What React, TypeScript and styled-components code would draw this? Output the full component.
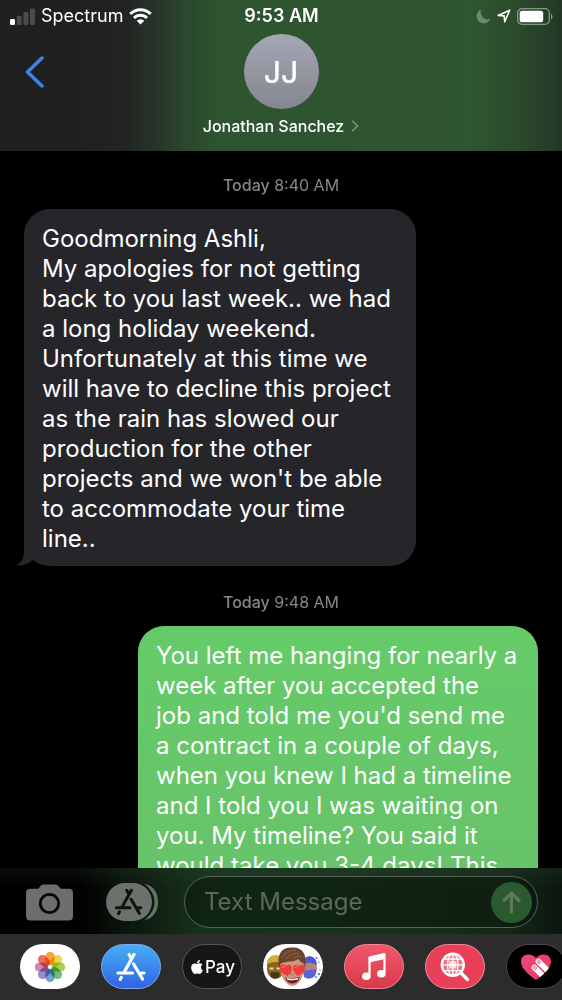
import React from "react";
import styled, { createGlobalStyle } from "styled-components";
import { FaApple } from "react-icons/fa";

const GlobalStyle = createGlobalStyle`
  *, *::before, *::after { box-sizing: border-box; }
  html, body { margin: 0; background: #000; }
  body, button, input { font-family: Inter, "Liberation Sans", sans-serif; }
  button { margin: 0; padding: 0; border: 0; background: none; color: inherit; cursor: pointer; }
  svg { display: block; flex: none; }
`;

const Screen = styled.div`
  display: flex;
  flex-direction: column;
  height: 100vh;
  overflow: hidden;
  background: #000;
  color: #fff;
`;

const Header = styled.header`
  flex: none;
  height: 151px;
  background: linear-gradient(
    90deg,
    #202020 0%,
    #202020 15%,
    #222422 22%,
    #26352a 28%,
    #2b482d 33%,
    #2e5430 39%,
    #2e5630 84%,
    #2a4a2c 92%,
    #263c28 98%,
    #243525 100%
  );
`;

const StatusBar = styled.div`
  display: grid;
  grid-template-columns: 1fr auto 1fr;
  align-items: center;
  height: 32px;
  padding: 0 9px 0 10px;
  font-size: 18px;
  line-height: 22px;
`;

const StatusGroup = styled.div<{ $end?: boolean }>`
  display: flex;
  align-items: center;
  justify-content: ${(p) => (p.$end ? "flex-end" : "flex-start")};
  gap: 6px;
`;

const Clock = styled.time`
  font-weight: 600;
`;

const ContactBar = styled.div`
  display: grid;
  grid-template-columns: 1fr auto 1fr;
  align-items: start;
  padding: 2px 24px 0;
`;

const BackButton = styled.button`
  justify-self: start;
  height: 75px;
`;

const Contact = styled.button`
  display: flex;
  flex-direction: column;
  align-items: center;
  gap: 7px;
`;

const Avatar = styled.span`
  display: flex;
  align-items: center;
  justify-content: center;
  width: 75px;
  height: 75px;
  border-radius: 50%;
  background: linear-gradient(#a4a7b5, #84868f);
  font-size: 30px;
  font-weight: 500;
`;

const ContactName = styled.span`
  display: flex;
  align-items: center;
  gap: 7px;
  font-size: 16px;
  font-weight: 500;
  line-height: 20px;
`;

const Conversation = styled.main`
  flex: 1;
  min-height: 0;
  display: flex;
  flex-direction: column;
  overflow-y: auto;
  scrollbar-width: none;
  padding: 24px 24px 0;
`;

const Stamp = styled.p`
  flex: none;
  margin: 0 0 14px;
  text-align: center;
  color: #87878b;
  font-size: 16px;
  line-height: 20px;

  b { font-weight: 500; }
`;

const Bubble = styled.div<{ $sent?: boolean }>`
  position: relative;
  flex: none;
  width: ${(p) => (p.$sent ? "400px" : "392px")};
  max-width: 80%;
  align-self: ${(p) => (p.$sent ? "flex-end" : "flex-start")};
  margin-bottom: ${(p) => (p.$sent ? "0" : "26px")};
  padding: 15px 18px 12px;
  border-radius: ${(p) => (p.$sent ? "26px 26px 0 0" : "26px")};
  background: ${(p) => (p.$sent ? "linear-gradient(#65cb68, #68c26a)" : "#26252a")};
  font-size: 24px;
  line-height: 30px;
  white-space: pre-line;
`;

const Tail = styled.svg`
  position: absolute;
  left: -8px;
  bottom: 0;
`;

const Composer = styled.form`
  flex: none;
  display: flex;
  align-items: center;
  height: 66px;
  padding: 2px 24px 0 26px;
  background:
    linear-gradient(rgba(60, 90, 60, 0.16), rgba(0, 0, 0, 0) 30%),
    linear-gradient(90deg, #000 0%, #000 14%, #0a150c 22%, #17321b 36%, #18321b 60%, #14291a 90%, #0b160d 100%);
`;

const CameraButton = styled.button`
  margin-right: 33px;
`;

const AppsButton = styled.button`
  margin-right: 26px;
`;

const Field = styled.div`
  flex: 1;
  min-width: 0;
  display: flex;
  align-items: center;
  height: 52px;
  padding: 0 5px 0 19px;
  border: 1px solid #566158;
  border-radius: 26px;
  background: rgba(6, 14, 7, 0.4);
`;

const MessageInput = styled.input`
  flex: 1;
  min-width: 0;
  padding: 0;
  border: 0;
  outline: 0;
  background: transparent;
  color: #fff;
  font-size: 24px;
  line-height: 30px;

  &::placeholder { color: #5b685d; opacity: 1; }
`;

const SendButton = styled.button`
  display: flex;
  align-items: center;
  justify-content: center;
  width: 41px;
  height: 41px;
  border-radius: 50%;
  background: #2a5a2e;
`;

const AppStrip = styled.nav`
  flex: none;
  display: flex;
  gap: 21px;
  height: 66px;
  padding: 10px 0 0 20px;
  overflow: hidden;
  background: #2c2c2d;
`;

const AppButton = styled.button<{ $bg: string; $ring?: string }>`
  flex: none;
  display: flex;
  align-items: center;
  justify-content: center;
  width: 60px;
  height: 45px;
  overflow: hidden;
  border: 1px solid ${(p) => p.$ring ?? "transparent"};
  border-radius: 23px;
  background: ${(p) => p.$bg} border-box;
  font-size: 17px;
  font-weight: 500;
`;

const SignalIcon = () => (
  <svg width="25" height="17" viewBox="0 0 25 17">
    <rect x="0" y="11" width="5" height="6" rx="1.2" fill="#fff" />
    <g fill="#4b4b4b">
      <rect x="6.7" y="8" width="5" height="9" rx="1.2" />
      <rect x="13.4" y="4" width="5" height="13" rx="1.2" />
      <rect x="20" y="0.5" width="5" height="16.5" rx="1.2" />
    </g>
  </svg>
);

const WifiIcon = () => (
  <svg width="23" height="17" viewBox="0 0 23 17">
    <g fill="none" stroke="#fff" strokeWidth="2.9">
      <path d="M1.2 6A14.6 14.6 0 0 1 21.8 6" />
      <path d="M5 10A9.2 9.2 0 0 1 18 10" />
    </g>
    <path d="M7.7 12.8A5.4 5.4 0 0 1 15.3 12.8L11.5 16.6Z" fill="#fff" />
  </svg>
);

const MoonIcon = () => (
  <svg width="15" height="15" viewBox="0 0 15 15">
    <path d="M5 .6A7.2 7.2 0 1 0 14.4 10.1C9 12 3.2 7 5 .6Z" fill="#6f8a70" />
  </svg>
);

const LocationIcon = () => (
  <svg width="14" height="14" viewBox="0 0 14 14">
    <path d="M1.2 6.4L12.7 1.2L7.7 12.7L7.2 6.9Z" fill="none" stroke="#fff" strokeWidth="1.6" strokeLinejoin="round" />
  </svg>
);

const BatteryIcon = () => (
  <svg width="36" height="17" viewBox="0 0 36 17">
    <rect x=".7" y=".7" width="31.6" height="15.6" rx="4.4" fill="none" stroke="#83997f" strokeWidth="1.3" />
    <rect x="2.7" y="2.7" width="23.5" height="11.6" rx="2.6" fill="#fff" />
    <path d="M34 5.7C36 6.6 36 10.4 34 11.3Z" fill="#83997f" />
  </svg>
);

const CameraIcon = () => (
  <svg width="47" height="37" viewBox="0 0 47 37">
    <path
      d="M4.5 4.8H11.5C13.5 4.8 14 1 17 .5H29.5C33 1 33.5 4.8 35.5 4.8H42.5Q47 4.8 47 9V32.3Q47 36.5 42.5 36.5H4.5Q0 36.5 0 32.3V9Q0 4.8 4.5 4.8Z"
      fill="#6e6e6e"
    />
    <circle cx="23.5" cy="19.5" r="9.2" fill="none" stroke="#050605" strokeWidth="2.8" />
  </svg>
);

const AppStoreMark = ({ color }: { color: string }) => (
  <g fill="none" stroke={color} strokeWidth="3.2" strokeLinecap="round">
    <path d="M18 2.5L8.5 19.5M13 2.5L15.5 6.6M17.6 12L26.5 27M2 21H16.5M24.8 21H28M5.3 25.4L4.2 27.4" />
  </g>
);

const AppsIcon = () => (
  <svg width="52" height="38" viewBox="0 0 52 38">
    <path d="M38 .8C48 2.5 52 10 52 19S48 35.5 38 37.2C50 30 50 8 38 .8Z" fill="#627264" />
    <rect x="0" y="0" width="48.5" height="38" rx="19" fill="#0b160d" />
    <rect x="0" y="0" width="46" height="38" rx="19" fill="#6c716d" />
    <g transform="translate(8.5 5) scale(.94)">
      <AppStoreMark color="#0b150d" />
    </g>
  </svg>
);

const petals = ["#f79a26", "#e8d532", "#9ccb3c", "#54b26c", "#5a95cf", "#8d7cc0", "#c378a8", "#f0584a"];

const PhotosIcon = () => (
  <svg width="32" height="32" viewBox="-16 -16 32 32">
    {petals.map((color, i) => (
      <rect
        key={color}
        x="-4.6"
        y="-15.2"
        width="9.2"
        height="13.4"
        rx="4.6"
        fill={color}
        fillOpacity=".88"
        transform={`rotate(${i * 45})`}
        style={{ mixBlendMode: "multiply" }}
      />
    ))}
  </svg>
);

const MemojiIcon = () => (
  <svg width="60" height="45" viewBox="0 0 60 45">
    <g>
      <ellipse cx="12.5" cy="24.5" rx="8.6" ry="10.5" fill="#8a6526" />
      <path d="M4 21C3 8 21 8 21 20Q12 16 4 21Z" fill="#d3ac35" />
      <path d="M4 20.5Q12 16 20 20V22.500Q12 19 4 23Z" fill="#8b6516" />
      <path d="M6.500 24.500H10.500M13.500 24.500H17.500" stroke="#e9d9a8" strokeWidth="1.800" />
      <path d="M7 29Q12 27 17 29L16 33Q12 36 8 33Z" fill="#4a3418" />
    </g>
    <g>
      <ellipse cx="46.500" cy="24.500" rx="7.500" ry="9.500" fill="#b08478" />
      <path d="M40 20C40 9 54 10 54 21Q47 17 40 20Z" fill="#4f57cf" />
      <path d="M40 27Q48 25 53.500 26L52 32Q46 37 41 33Z" fill="#5b66d4" />
      <g fill="#7577ee">
        <circle cx="53.5" cy="14" r="1.1" />
        <circle cx="56" cy="18.500" r=".8" />
        <circle cx="56" cy="30" r="1.3" />
        <circle cx="53" cy="33" r="1" />
        <circle cx="57" cy="26" r=".8" />
      </g>
    </g>
    <g transform="translate(-1 0)">
      <path d="M18 22C18 10 22 6 30 6S43 10 42 22C42 32 37 42 30.500 42S18 32 18 22Z" fill="#d1937a" />
      <path d="M17.200 24C14.500 9 20 3.500 30 3.500S45.500 9 43 24L41.500 19.500L39 18L36 15Q32 18 27 17.500L20 19L18.500 20Z" fill="#6b432c" />
      <path d="M20 14Q25 6 34 6.500M24 15Q29 9 37 9.500M31 14Q36 11 39.500 13" fill="none" stroke="#8a5a3c" strokeWidth="1.200" />
      <path d="M23 33.500Q31 35 38 33Q36 39.500 30.500 39.500T23 33.500Z" fill="#672321" />
      <path d="M24.500 34Q31 35.500 36.500 33.700L36 35.500Q30 37 25.300 35.700Z" fill="#fff" />
      <path d="M29.500 26L28 30Q30 31.500 32 30" fill="none" stroke="#b8745a" strokeWidth="1" />
      <g fill="#ee3b3c">
        <path d="M25.500 32C20 29.500 17 26.500 17.700 23C18.500 20 22.500 19.800 24 22.500C25.500 19.500 30 20.400 30 24C30 27 27.500 30 25.500 32Z" />
        <path d="M36 32C33 30 30.800 27 31 24C31.400 20.500 35.500 19.800 37 22.500C38.500 19.600 43 20.400 43 23.700C43 27 40 30 36 32Z" />
      </g>
      <path d="M20 23.500Q21 22 22.500 23M33.500 23.500Q34.500 22 35.500 23" fill="none" stroke="#ff9a92" strokeWidth="1" />
    </g>
  </svg>
);

const MusicIcon = () => (
  <svg width="30" height="32" viewBox="0 0 30 32">
    <path d="M10.500 24.500V6.500L25.500 3V21.500" fill="none" stroke="#fff" strokeWidth="2.200" strokeLinejoin="round" />
    <path d="M10.500 5.700L25.500 2.300V8L10.500 11.400Z" fill="#fff" />
    <ellipse cx="7.300" cy="25.300" rx="4.300" ry="3.800" fill="#fff" />
    <ellipse cx="22.300" cy="22.800" rx="4.300" ry="3.800" fill="#fff" />
  </svg>
);

const ImageSearchIcon = () => (
  <svg width="30" height="30" viewBox="0 0 30 30">
    <circle cx="12.800" cy="12.800" r="11" fill="#f07386" stroke="#fff" strokeWidth="2.400" />
    <rect x="9.300" y="9" width="7" height="7.500" fill="#ffdce1" />
    <g fill="none" stroke="#fff" strokeWidth="1.300">
      <ellipse cx="12.800" cy="12.800" rx="5.200" ry="11" />
      <path d="M12.800 2V24M2 12.800H24M4 7H21.600M4 18.600H21.600" />
    </g>
    <path d="M21.300 21.300L27.500 27.500" stroke="#fff" strokeWidth="3.400" strokeLinecap="round" />
  </svg>
);

const DigitalTouchIcon = () => (
  <svg width="32" height="30" viewBox="0 0 32 30">
    <defs>
      <linearGradient id="heartFill" x1="0" y1="0" x2="1" y2="1">
        <stop offset="0" stopColor="#ee4a80" />
        <stop offset="1" stopColor="#e8375a" />
      </linearGradient>
      <clipPath id="heartClip">
        <path d="M16 28C10 24 1 17 1 9.500C1 1 12 .5 16 6C20 .5 31 1 31 9.500C31 17 22 24 16 28Z" />
      </clipPath>
    </defs>
    <g clipPath="url(#heartClip)">
      <rect width="32" height="30" fill="url(#heartFill)" />
      <g fill="#fff">
        <rect x="-2.800" y="0" width="5.600" height="24" rx="2.800" transform="translate(12.500 13.500) rotate(-45)" />
        <rect x="-2.800" y="0" width="5.600" height="24" rx="2.800" transform="translate(16.500 7.500) rotate(-45)" />
      </g>
      <g fill="#f5b3c4" stroke="#d8587c" strokeWidth=".6">
        <rect x="-1.500" y="1.300" width="3" height="4" rx="1.400" transform="translate(12.500 13.500) rotate(-45)" />
        <rect x="-1.500" y="1.300" width="3" height="4" rx="1.400" transform="translate(16.500 7.500) rotate(-45)" />
      </g>
    </g>
  </svg>
);

const received = `Goodmorning Ashli,
My apologies for not getting back to you last week.. we had a long holiday weekend. Unfortunately at this time we will have to decline this project as the rain has slowed our production for the other projects and we won't be able to accommodate your time line..`;

const sent =
  "You left me hanging for nearly a week after you accepted the job and told me you'd send me a contract in a couple of days, when you knew I had a timeline and I told you I was waiting on you. My timeline? You said it would take you 3-4 days! This";

export default function App() {
  return (
    <Screen>
      <GlobalStyle />
      <Header>
        <StatusBar>
          <StatusGroup>
            <SignalIcon />
            <span>Spectrum</span>
            <WifiIcon />
          </StatusGroup>
          <Clock>9:53 AM</Clock>
          <StatusGroup $end>
            <MoonIcon />
            <LocationIcon />
            <BatteryIcon />
          </StatusGroup>
        </StatusBar>
        <ContactBar>
          <BackButton type="button" aria-label="Back">
            <svg width="21" height="32" viewBox="0 0 21 32">
              <path d="M18 2L3.500 16L18 30" fill="none" stroke="#3d84e8" strokeWidth="3.500" strokeLinecap="round" strokeLinejoin="round" />
            </svg>
          </BackButton>
          <Contact type="button">
            <Avatar>JJ</Avatar>
            <ContactName>
              Jonathan Sanchez
              <svg width="8" height="12" viewBox="0 0 8 12">
                <path d="M1 .8L6.600 6L1 11.200" fill="none" stroke="#829783" strokeWidth="1.500" />
              </svg>
            </ContactName>
          </Contact>
        </ContactBar>
      </Header>

      <Conversation>
        <Stamp>
          <b>Today</b> 8:40 AM
        </Stamp>
        <Bubble>
          {received}
          <Tail width="26" height="24" viewBox="0 0 26 24" aria-hidden="true">
            <path d="M8 0V9C8 16 5.500 21 .5 23C6 24.500 12 22 17 18L24 10V0Z" fill="#26252a" />
          </Tail>
        </Bubble>
        <Stamp>
          <b>Today</b> 9:48 AM
        </Stamp>
        <Bubble $sent>{sent}</Bubble>
      </Conversation>

      <Composer onSubmit={(e) => e.preventDefault()}>
        <CameraButton type="button" aria-label="Camera">
          <CameraIcon />
        </CameraButton>
        <AppsButton type="button" aria-label="Apps">
          <AppsIcon />
        </AppsButton>
        <Field>
          <MessageInput type="text" aria-label="Text Message" placeholder="Text Message" />
          <SendButton type="submit" aria-label="Send">
            <svg width="19" height="23" viewBox="0 0 19 23">
              <path d="M9.500 21V2.500M2 9.500L9.500 2L17 9.500" fill="none" stroke="#5c7a5e" strokeWidth="3.200" strokeLinecap="round" strokeLinejoin="round" />
            </svg>
          </SendButton>
        </Field>
      </Composer>

      <AppStrip aria-label="Message apps">
        <AppButton type="button" aria-label="Photos" $bg="#fff">
          <PhotosIcon />
        </AppButton>
        <AppButton type="button" aria-label="App Store" $bg="linear-gradient(#48b0f6, #2f62e4)" $ring="#7ea9ee">
          <svg width="30" height="30" viewBox="0 0 30 30">
            <AppStoreMark color="#fff" />
          </svg>
        </AppButton>
        <AppButton type="button" $bg="#161616" $ring="#565656">
          <FaApple size={16} aria-hidden="true" />
          Pay
        </AppButton>
        <AppButton type="button" aria-label="Memoji" $bg="#fff">
          <MemojiIcon />
        </AppButton>
        <AppButton type="button" aria-label="Music" $bg="linear-gradient(#f3576c, #d93a4a)" $ring="#ee8a97">
          <MusicIcon />
        </AppButton>
        <AppButton type="button" aria-label="Image search" $bg="#ea3f58" $ring="#f08b99">
          <ImageSearchIcon />
        </AppButton>
        <AppButton type="button" aria-label="Digital Touch" $bg="#000" $ring="#4a4a4a">
          <DigitalTouchIcon />
        </AppButton>
      </AppStrip>
    </Screen>
  );
}
